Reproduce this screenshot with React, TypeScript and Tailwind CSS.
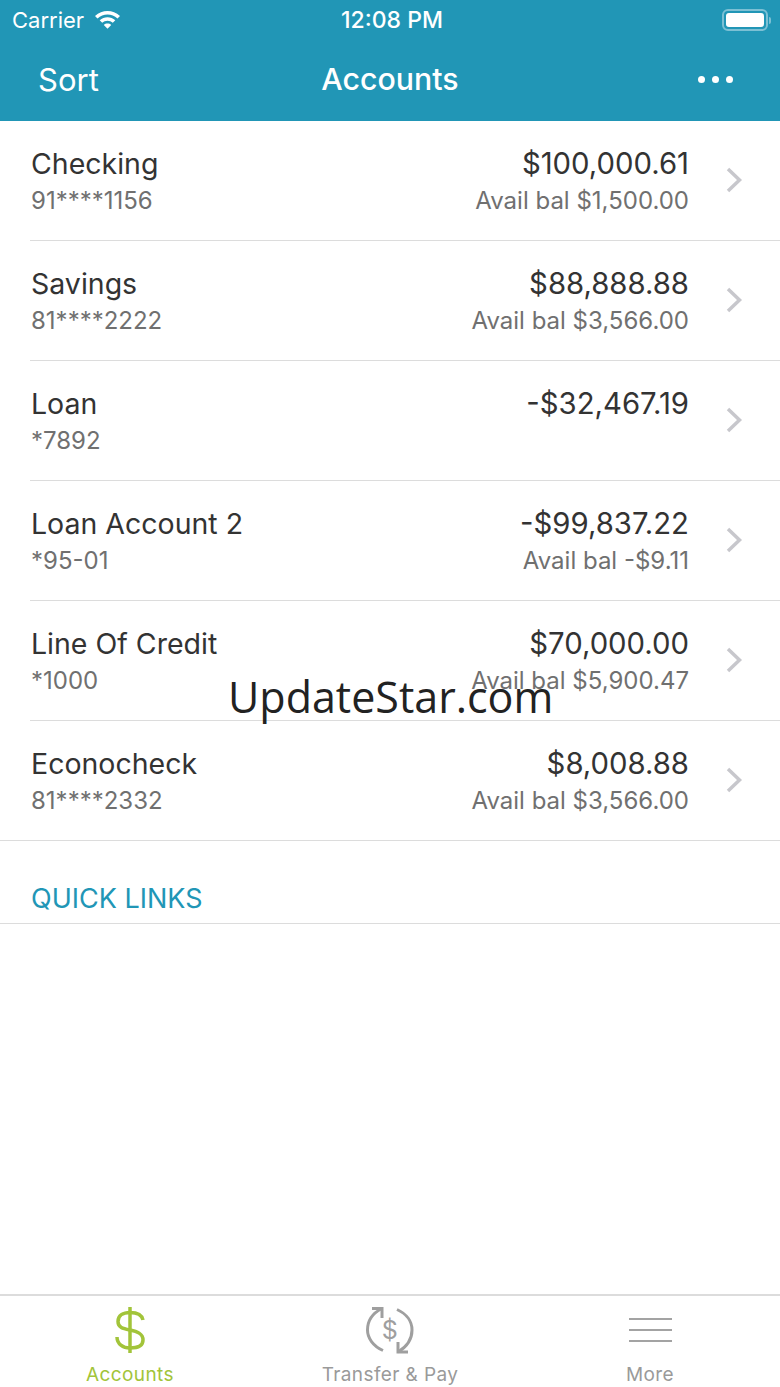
import React from "react";

type Acc = { name: string; num: string; amt: string; avail?: string };
const accounts: Acc[] = [
  { name: "Checking", num: "91****1156", amt: "$100,000.61", avail: "Avail bal $1,500.00" },
  { name: "Savings", num: "81****2222", amt: "$88,888.88", avail: "Avail bal $3,566.00" },
  { name: "Loan", num: "*7892", amt: "-$32,467.19" },
  { name: "Loan Account 2", num: "*95-01", amt: "-$99,837.22", avail: "Avail bal -$9.11" },
  { name: "Line Of Credit", num: "*1000", amt: "$70,000.00", avail: "Avail bal $5,900.47" },
  { name: "Econocheck", num: "81****2332", amt: "$8,008.88", avail: "Avail bal $3,566.00" },
];

function Row({ a, last }: { a: Acc; last: boolean }) {
  return (
    <div className={`h-[120px] flex border-b border-[#dcdcdc] ${last ? "ml-0" : "ml-[30px]"}`}>
      <div className={`flex-1 flex justify-between pt-[24px] ${last ? "pl-[31px]" : "pl-px"}`}>
        <div>
          <div className="text-[28.500px] leading-[38px] text-[#333333]">{a.name}</div>
          <div className="text-[24px] leading-[36px] text-[#707070]">{a.num}</div>
        </div>
        <div className="text-right">
          <div className="text-[29.300px] leading-[38px] text-[#333333]">{a.amt}</div>
          {a.avail && <div className="text-[24px] leading-[36px] text-[#707070]">{a.avail}</div>}
        </div>
      </div>
      <div className="w-[91px] flex items-center pl-[37px] pb-[2px]">
        <svg width="17" height="28" viewBox="0 0 17 28" fill="none" stroke="#c7c7cc" strokeWidth="3.500">
          <path d="M2 3 L13.500 14 L2 25" />
        </svg>
      </div>
    </div>
  );
}

export default function App() {
  return (
    <div className="relative w-[780px] h-[1387px] bg-white flex flex-col overflow-hidden font-['Inter','Liberation_Sans',sans-serif]">
      <div className="h-[121px] bg-[#2196b6] text-white shrink-0">
        <div className="h-[40px] flex items-center justify-between pl-[12px] pr-[9px] relative">
          <div className="flex items-center gap-[10px]">
            <span className="text-[22px] leading-none">Carrier</span>
            <svg width="27" height="20" viewBox="0 0 26 20" fill="white">
              <path d="M13 1C8.400 1 4.300 2.800 0.500 6l2.500 2.600C5.900 6 9.300 4.500 13 4.500s7.100 1.500 10 4.100L25.500 6C21.700 2.800 17.600 1 13 1z" />
              <path d="M13 7.200c-2.900 0-5.500 1.100-7.800 3l2.500 2.500c1.400-1.200 3.300-2 5.300-2s3.900.8 5.300 2l2.500-2.500c-2.300-1.900-4.900-3-7.800-3z" />
              <path d="M13 13.500c-1.400 0-2.700.5-3.700 1.400L13 18.700l3.700-3.800c-1-.9-2.300-1.400-3.700-1.400z" />
            </svg>
          </div>
          <span className="absolute left-[4px] right-0 text-center text-[23px] leading-none font-medium">12:08 PM</span>
          <div className="flex items-center">
            <div className="w-[46px] h-[22px] rounded-[6px] border-2 border-[#7cc0d4] p-[2px]">
              <div className="w-full h-full rounded-[3px] bg-white" />
            </div>
            <div className="w-[2px] h-[7px] ml-[1px] rounded-r-sm bg-[#7cc0d4]" />
          </div>
        </div>
        <div className="h-[81px] relative flex items-center justify-between pl-[38px] pr-[47px] pb-[3px]">
          <span className="text-[31px] leading-none">Sort</span>
          <span className="absolute left-0 right-0 text-center text-[30.300px] leading-none font-medium pt-[1px]">Accounts</span>
          <div className="flex gap-[7px]">
            <div className="w-[7px] h-[7px] rounded-full bg-white" />
            <div className="w-[7px] h-[7px] rounded-full bg-white" />
            <div className="w-[7px] h-[7px] rounded-full bg-white" />
          </div>
        </div>
      </div>

      <div className="flex-1">
        {accounts.map((a, i) => (
          <Row key={a.name} a={a} last={i === accounts.length - 1} />
        ))}
        <div className="h-[83px] pl-[31px] pt-[42px] border-b border-[#dcdcdc] text-[27px] leading-[32px] text-[#2196b6]">QUICK LINKS</div>
      </div>

      <div className="h-[93px] shrink-0 border-t-2 border-[#dcdcdc] grid grid-cols-3 text-[19px] tracking-[0.4px]">
        <div className="flex flex-col items-center pt-[10px] text-[#a2c43a]">
          <svg width="30" height="48" viewBox="0 0 30 48" fill="none" stroke="#a2c43a" strokeWidth="3.500">
            <path d="M15 1V47" />
            <path d="M28 14C27 9 22 6.500 15 6.500S3 9.500 3 15.500 8 22.500 15 24 28 27.500 28 34 22 42 15 42 2 38 2 31" />
          </svg>
          <span className="mt-[9px] leading-[24px]">Accounts</span>
        </div>
        <div className="flex flex-col items-center pt-[10px] text-[#9a9a9a]">
          <svg width="48" height="48" viewBox="0 0 48 48" fill="none" stroke="#9f9f9f" strokeWidth="3">
            <path d="M16 2.500C5 8 1.500 16 1.500 24 1.500 32 7 40 17 44.500" />
            <path d="M6 2.500H16V12" />
            <path d="M31 3.500C41 8 46 16 46 24 46 33 42 40 32 46" />
            <path d="M32 36V46H42" />
            <text x="24" y="32.500" textAnchor="middle" fontSize="25" fill="#9f9f9f" stroke="none" fontFamily="Inter">$</text>
          </svg>
          <span className="mt-[9px] leading-[24px]">Transfer &amp; Pay</span>
        </div>
        <div className="flex flex-col items-center pt-[10px] text-[#9a9a9a]">
          <div className="h-[48px] flex flex-col justify-center gap-[9px] pb-[1px]">
            <div className="w-[43px] h-[2px] bg-[#a3a3a3]" />
            <div className="w-[43px] h-[2px] bg-[#a3a3a3]" />
            <div className="w-[43px] h-[2px] bg-[#a3a3a3]" />
          </div>
          <span className="mt-[9px] leading-[24px]">More</span>
        </div>
      </div>

      <div className="absolute left-[228px] top-[666px] text-[43px] leading-[62px] text-[#222] font-['Open_Sans',sans-serif] whitespace-nowrap">UpdateStar.com</div>
    </div>
  );
}
